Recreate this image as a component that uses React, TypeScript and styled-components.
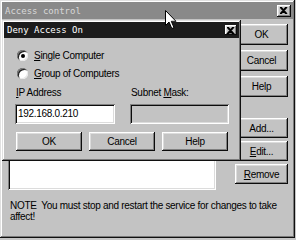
import React from "react";
import styled, { createGlobalStyle, css } from "styled-components";

const GlobalStyle = createGlobalStyle`
  html, body {
    margin: 0;
    padding: 0;
    background: #c6c6c6;
  }

  body {
    font-family: "Liberation Sans", Arial, sans-serif;
    font-size: 10px;
    letter-spacing: -0.3px;
    color: #000;
  }
`;

const raised = css`
  box-shadow: inset -1px -1px #0c0c0c, inset 1px 1px #ffffff,
    inset -2px -2px #808080, inset 2px 2px #dcdcdc;
`;

const sunken = css`
  box-shadow: inset 1px 1px #808080, inset -1px -1px #ffffff,
    inset 2px 2px #0c0c0c, inset -2px -2px #dcdcdc;
`;

const Window = styled.div`
  position: relative;
  box-sizing: border-box;
  display: flex;
  flex-direction: column;
  width: 295px;
  height: 238px;
  padding: 2px;
  background: #c3c3c3;
  box-shadow: inset -1px -1px #101010, inset 1px 1px #e0e0e0,
    inset -2px -2px #7a7a7a, inset 2px 2px #ffffff;
`;

const Dialog = styled(Window)`
  position: absolute;
  left: 2px;
  top: 20px;
  width: 239px;
  height: 141px;
`;

const TitleBar = styled.div<{ $active?: boolean }>`
  display: flex;
  align-items: center;
  justify-content: space-between;
  flex: none;
  height: ${(p) => (p.$active ? 16 : 17)}px;
  padding: 0 2px 0 3px;
  background: ${(p) => (p.$active ? "#1c1c1c" : "#898989")};
  color: ${(p) => (p.$active ? "#ffffff" : "#d8d8d8")};
  font-family: "DejaVu Sans Mono", "Liberation Mono", monospace;
  font-size: 9px;
  letter-spacing: 0;
`;

const CloseBox = styled.div<{ $small?: boolean }>`
  display: flex;
  align-items: center;
  justify-content: center;
  width: ${(p) => (p.$small ? 12 : 14)}px;
  height: ${(p) => (p.$small ? 10 : 12)}px;
  background: #c3c3c3;
  ${raised}
`;

const Body = styled.div`
  flex: 1;
  display: grid;
  grid-template-columns: 1fr 53px;
  grid-template-rows: auto 1fr;
  column-gap: 19px;
  padding: 5px 5px 0 6px;
`;

const ListBox = styled.div`
  height: 166px;
  background: #ffffff;
  ${sunken}
`;

const ButtonColumn = styled.div`
  display: flex;
  flex-direction: column;
`;

const Button = styled.button<{ $h?: number; $gap?: number }>`
  box-sizing: border-box;
  height: ${(p) => p.$h ?? 21}px;
  margin: ${(p) => p.$gap ?? 0}px 0 0;
  padding: 0;
  border: none;
  background: #c3c3c3;
  font: inherit;
  letter-spacing: inherit;
  color: #000;
  ${raised}
`;

const Note = styled.p`
  grid-column: 1 / span 2;
  margin: 10px 0 0 2px;
  line-height: 11px;
  white-space: pre-wrap;
`;

const DialogBody = styled.div`
  display: flex;
  flex-direction: column;
  padding: 8px 0 0 11px;
`;

const RadioRow = styled.label`
  display: flex;
  align-items: center;
  gap: 6px;
  height: 18px;
  margin-left: 2px;
`;

const RadioDot = styled.span<{ $checked?: boolean }>`
  position: relative;
  width: 11px;
  height: 11px;
  border-radius: 50%;
  background: #ffffff;
  box-shadow: inset 1px 1px #808080, inset -1px -1px #e8e8e8,
    inset 2px 2px #202020;

  &::after {
    content: "";
    display: ${(p) => (p.$checked ? "block" : "none")};
    position: absolute;
    left: 4px;
    top: 4px;
    width: 4px;
    height: 4px;
    border-radius: 50%;
    background: #000;
  }
`;

const Fields = styled.div`
  display: grid;
  grid-template-columns: 100px 99px;
  column-gap: 15px;
  margin-top: 4px;
`;

const FieldLabel = styled.div`
  height: 14px;
  line-height: 14px;
  padding-left: 1px;
`;

const Input = styled.div<{ $disabled?: boolean }>`
  height: 20px;
  margin-top: 4px;
  padding-left: 3px;
  line-height: 20px;
  background: ${(p) => (p.$disabled ? "#c3c3c3" : "#ffffff")};
  ${sunken}
`;

const ButtonRow = styled.div`
  display: grid;
  grid-template-columns: repeat(3, 66px);
  column-gap: 7px;
  margin: 8px 0 0 1px;
`;

const Cursor = styled.svg`
  position: absolute;
  left: 165px;
  top: 10px;
`;

function Close({ small }: { small?: boolean }) {
  return (
    <CloseBox $small={small}>
      <svg width="8" height="7" viewBox="0 0 8 7">
        <path d="M1 0 L7 7 M7 0 L1 7 M0 0 L6 7 M6 0 L0 7" stroke="#000" strokeWidth="1.2" />
      </svg>
    </CloseBox>
  );
}

export default function App() {
  return (
    <>
      <GlobalStyle />
      <Window>
        <TitleBar>
          <span>Access control</span>
          <Close />
        </TitleBar>

        <Body>
          <ListBox />

          <ButtonColumn>
            <Button>OK</Button>
            <Button $gap={5}>Cancel</Button>
            <Button $gap={5}>Help</Button>
            <Button $gap={21} $h={20}>Add...</Button>
            <Button $gap={3} $h={20}>
              <u>E</u>dit...
            </Button>
            <Button $gap={3} $h={20}>
              <u>R</u>emove
            </Button>
          </ButtonColumn>

          <Note>{"NOTE  You must stop and restart the service for changes to take affect!"}</Note>
        </Body>

        <Dialog>
          <TitleBar $active>
            <span>Deny Access On</span>
            <Close small />
          </TitleBar>

          <DialogBody>
            <RadioRow>
              <RadioDot $checked />
              <span>
                <u>S</u>ingle Computer
              </span>
            </RadioRow>
            <RadioRow>
              <RadioDot />
              <span>
                <u>G</u>roup of Computers
              </span>
            </RadioRow>

            <Fields>
              <div>
                <FieldLabel>
                  <u>I</u>P Address
                </FieldLabel>
                <Input>192.168.0.210</Input>
              </div>
              <div>
                <FieldLabel>
                  Subnet <u>M</u>ask:
                </FieldLabel>
                <Input $disabled />
              </div>
            </Fields>

            <ButtonRow>
              <Button $h={19}>OK</Button>
              <Button $h={19}>Cancel</Button>
              <Button $h={19}>Help</Button>
            </ButtonRow>
          </DialogBody>
        </Dialog>

        <Cursor width="13" height="20" viewBox="0 0 13 20">
          <path
            d="M0.5 0.5 L0.5 15.5 L4 12 L6.8 18.5 L9 17.6 L6.3 11.3 L11 11.3 Z"
            fill="#ffffff"
            stroke="#000000"
            strokeWidth="1"
          />
        </Cursor>
      </Window>
    </>
  );
}
